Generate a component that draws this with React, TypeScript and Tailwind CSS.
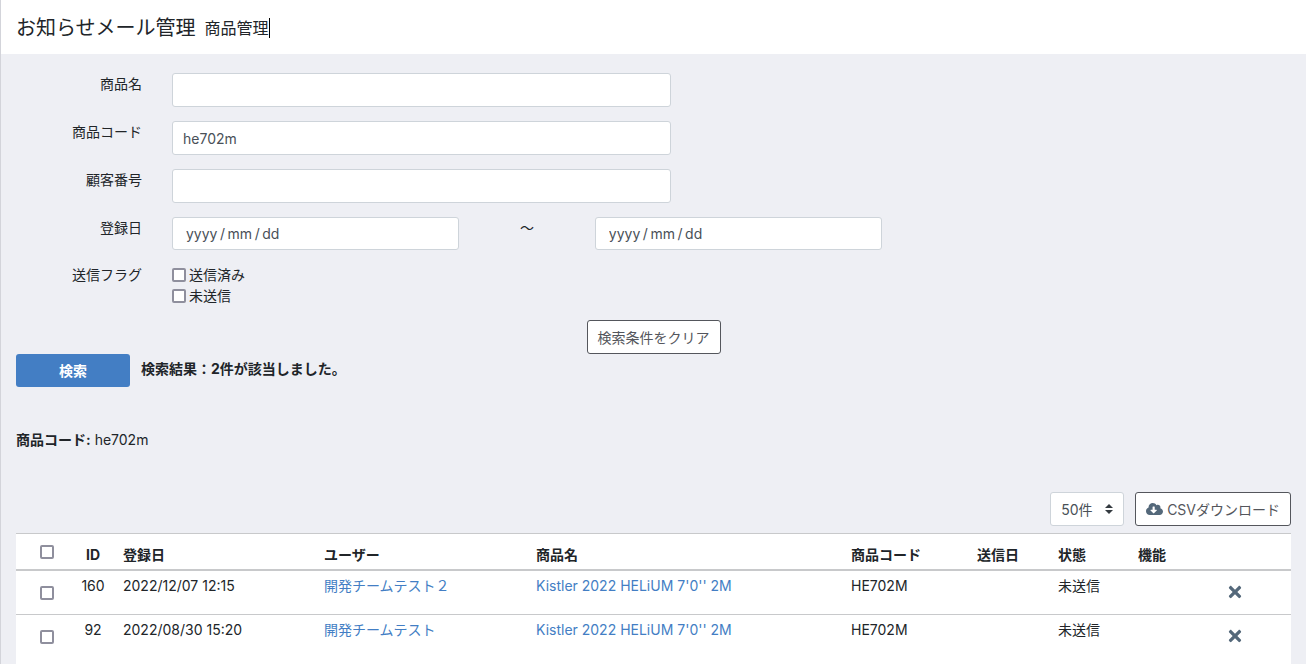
import { useState, type ReactNode } from "react";
import { FaCloudDownloadAlt, FaTimes } from "react-icons/fa";

const FIELD =
  "block w-full rounded-[3px] border border-[#ced4da] bg-white px-[10px] text-[14px] text-[#495057] outline-none";
const DATE_FIELD =
  "block h-[33px] w-full rounded-[3px] border border-[#ced4da] bg-white px-[13px] text-[14px] text-[#495057] outline-none placeholder:text-[#495057]";
const CHECKBOX =
  "block size-[14px] shrink-0 appearance-none rounded-[2px] border-2 border-[#8f8f9d] bg-white checked:bg-[#437ec4]";

// Thin spaces around the separators, as in a native date field.
const DATE_HINT = "yyyy\u2009/\u2009mm\u2009/\u2009dd";

const rows = [
  { id: 160, date: "2022/12/07 12:15", user: "開発チームテスト２", product: "Kistler 2022 HELiUM 7'0'' 2M", code: "HE702M", status: "未送信" },
  { id: 92, date: "2022/08/30 15:20", user: "開発チームテスト", product: "Kistler 2022 HELiUM 7'0'' 2M", code: "HE702M", status: "未送信" },
];

function FormRow({ label, htmlFor, children }: { label: string; htmlFor?: string; children: ReactNode }) {
  const labelClass = "w-[156px] shrink-0 pr-[15px] text-right";
  return (
    <div className="flex items-start">
      {htmlFor ? (
        <label htmlFor={htmlFor} className={labelClass}>{label}</label>
      ) : (
        <span className={labelClass}>{label}</span>
      )}
      {children}
    </div>
  );
}

function TextRow({ label, id, value = "" }: { label: string; id: string; value?: string }) {
  const [text, setText] = useState(value);
  return (
    <FormRow label={label} htmlFor={id}>
      <div className="w-[40.5%] px-[15px]">
        <input id={id} type="text" value={text} onChange={(e) => setText(e.target.value)} className={`${FIELD} h-[34px]`} />
      </div>
    </FormRow>
  );
}

export default function App() {
  return (
    <div className="flex min-h-screen flex-col border-l border-[#d3d4da] bg-[#eeeff4] font-['Inter','Noto_Sans_CJK_JP',sans-serif] text-[14px] leading-[21px] text-[#212529]">
      <header className="flex h-[54px] shrink-0 items-center gap-[9px] bg-white px-[15px] pt-[1px]">
        <h1 className="text-[20px] leading-[24px]">お知らせメール管理</h1>
        <span className="border-r border-black text-[16px] leading-[20px]">商品管理</span>
      </header>

      <main className="flex flex-1 flex-col pt-[19px]">
        <form className="flex flex-col gap-[14px]" onSubmit={(e) => e.preventDefault()}>
          <TextRow label="商品名" id="name" />
          <TextRow label="商品コード" id="code" value="he702m" />
          <TextRow label="顧客番号" id="customer" />
          <FormRow label="登録日" htmlFor="from">
            <div className="w-[24.3%] px-[15px]">
              <input id="from" type="text" placeholder={DATE_HINT} className={DATE_FIELD} />
            </div>
            <span className="w-[8.1%] text-center">〜</span>
            <div className="w-[24.3%] px-[15px]">
              <input type="text" aria-label="登録日（終了）" placeholder={DATE_HINT} className={DATE_FIELD} />
            </div>
          </FormRow>
          <FormRow label="送信フラグ">
            <div className="px-[15px]">
              <label className="flex items-center gap-[3px]">
                <input type="checkbox" className={CHECKBOX} />
                送信済み
              </label>
              <label className="flex items-center gap-[3px]">
                <input type="checkbox" className={CHECKBOX} />
                未送信
              </label>
            </div>
          </FormRow>
        </form>

        <div className="mt-[14px] flex justify-center">
          <button type="button" className="h-[34px] rounded-[3px] border border-[#54565c] bg-white px-[10px] text-[#54565c]">
            検索条件をクリア
          </button>
        </div>

        <div className="flex gap-[11px] px-[15px]">
          <button type="button" className="h-[33px] w-[114px] rounded-[3px] bg-[#437ec4] font-bold text-white">検索</button>
          <p className="pt-[4px] font-bold">検索結果：2件が該当しました。</p>
        </div>

        <p className="mt-[42px] px-[15px]">
          <strong>商品コード:</strong> he702m
        </p>

        <div className="mt-[42px] flex justify-end gap-[11px] px-[15px]">
          <div className="relative w-[74px]">
            <select aria-label="表示件数" defaultValue="50" className="h-[34px] w-full appearance-none rounded-[3px] border border-[#ced4da] bg-white pl-[10px] text-[#495057]">
              <option value="10">10件</option>
              <option value="50">50件</option>
              <option value="100">100件</option>
            </select>
            <svg viewBox="0 0 4 5" className="pointer-events-none absolute top-[12px] right-[11px] h-[10px] w-[8px]" fill="#343a40" aria-hidden="true">
              <path d="M2 0L0 2h4zm0 5L0 3h4z" />
            </svg>
          </div>
          <button type="button" className="flex h-[34px] items-center gap-[4px] rounded-[3px] border border-[#54565c] bg-white px-[10px] text-[#54565c]">
            <FaCloudDownloadAlt className="h-[14px] w-[17px] text-[#54687a]" />
            CSVダウンロード
          </button>
        </div>

        <div className="mx-[15px] mt-[7px] flex-1 bg-white">
          <table className="w-full table-fixed border-collapse text-left">
            <colgroup>
              <col className="w-[57px]" />
              <col className="w-[40px]" />
              <col className="w-[201px]" />
              <col className="w-[212px]" />
              <col className="w-[315px]" />
              <col className="w-[126px]" />
              <col className="w-[81px]" />
              <col className="w-[80px]" />
              <col className="w-[50px]" />
              <col className="w-[113px]" />
            </colgroup>
            <thead>
              <tr className="h-[36px] border-t border-b-2 border-[#c8c9cb] align-top [&>th]:px-[10px] [&>th]:pt-[10px] [&>th]:font-bold">
                <th>
                  <input type="checkbox" aria-label="すべて選択" className={`${CHECKBOX} mt-[1px] ml-[14px]`} />
                </th>
                <th className="text-center">ID</th>
                <th>登録日</th>
                <th>ユーザー</th>
                <th>商品名</th>
                <th>商品コード</th>
                <th>送信日</th>
                <th>状態</th>
                <th colSpan={2}>機能</th>
              </tr>
            </thead>
            <tbody>
              {rows.map((row) => (
                <tr key={row.id} className="h-[45px] border-t border-[#c8c9cb] align-top [&>td]:px-[10px] [&>td]:pt-[4px]">
                  <td>
                    <input type="checkbox" aria-label={`${row.id}を選択`} className={`${CHECKBOX} mt-[11px] ml-[14px]`} />
                  </td>
                  <td className="text-center">
                    <span className="-mx-[10px] block">{row.id}</span>
                  </td>
                  <td>{row.date}</td>
                  <td><a href="#user" className="text-[#437ec4]">{row.user}</a></td>
                  <td><a href="#product" className="text-[#437ec4]">{row.product}</a></td>
                  <td>{row.code}</td>
                  <td></td>
                  <td>{row.status}</td>
                  <td></td>
                  <td>
                    <button type="button" aria-label="削除" className="mx-auto mt-[8px] block">
                      <FaTimes className="size-[18px] text-[#54687a]" />
                    </button>
                  </td>
                </tr>
              ))}
            </tbody>
          </table>
        </div>
      </main>
    </div>
  );
}
